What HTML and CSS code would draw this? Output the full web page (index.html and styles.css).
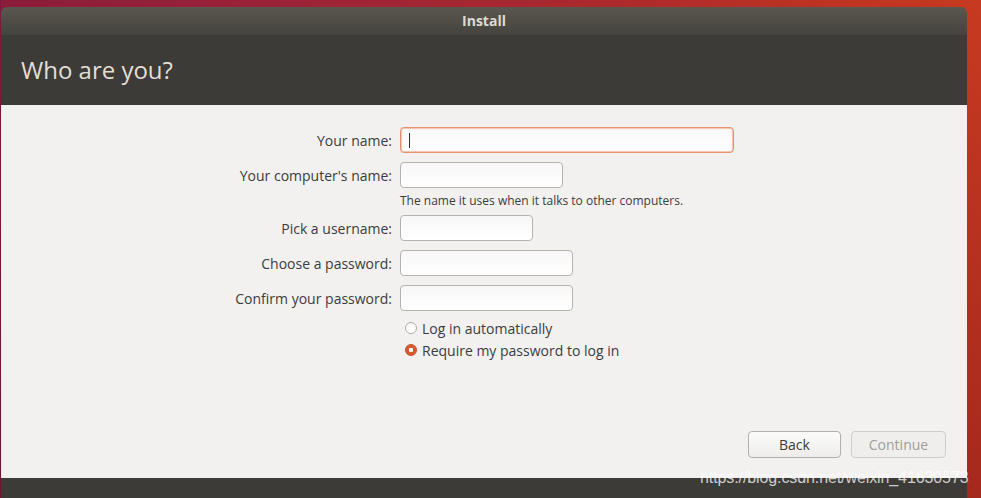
FILE: index.html
```html
<!DOCTYPE html>
<html>
<head>
<meta charset="utf-8">
<link rel="stylesheet" href="styles.css">
</head>
<body>
<div class="window">
  <div class="titlebar">Install</div>
  <div class="header"><h1>Who are you?</h1></div>
  <div class="content">
    <div class="form">
      <label class="lbl">Your name:</label>
      <div class="field"><div class="input focus w-name"><span class="caret"></span></div></div>

      <label class="lbl">Your computer's name:</label>
      <div class="field"><div class="input w-comp"></div></div>
      <div></div>
      <div class="hint">The name it uses when it talks to other computers.</div>

      <label class="lbl">Pick a username:</label>
      <div class="field"><div class="input w-user"></div></div>

      <label class="lbl">Choose a password:</label>
      <div class="field"><div class="input w-pass"></div></div>

      <label class="lbl">Confirm your password:</label>
      <div class="field"><div class="input w-pass"></div></div>

      <div></div>
      <div class="radios">
        <div class="radio"><span class="dot"></span>Log in automatically</div>
        <div class="radio"><span class="dot on"></span>Require my password to log in</div>
      </div>
    </div>
    <div class="buttons">
      <button class="btn">Back</button>
      <button class="btn disabled">Continue</button>
    </div>
  </div>
  <div class="footer"></div>
</div>
<div class="watermark">https://blog.csdn.net/weixin_41630573</div>
</body>
</html>
```
FILE: styles.css
```css
html, body {
  margin: 0;
  padding: 0;
}
body {
  width: 981px;
  height: 498px;
  overflow: hidden;
  position: relative;
  background:
    linear-gradient(180deg, rgba(0, 0, 0, 0) 0px, rgba(90, 0, 20, 0.3) 498px),
    linear-gradient(90deg, #6e1640 0px, #8a1d3a 1px, #97213a 200px, #a8282f 550px, #bf3322 850px, #c73a21 981px);
  padding: 7px 14px 0 1px;
  box-sizing: border-box;
  font-family: "Open Sans", "Noto Sans", sans-serif;
}
.window {
  width: 966px;
  height: 491px;
  display: flex;
  flex-direction: column;
  border-radius: 6px 6px 0 0;
  overflow: hidden;
}
.titlebar {
  height: 28px;
  background: linear-gradient(#5a5750, #45433e);
  color: #dfdbd2;
  font-weight: bold;
  font-size: 14px;
  text-align: center;
  line-height: 28px;
}
.header {
  height: 70px;
  background: #3c3b37;
  display: flex;
  align-items: center;
  padding-left: 20px;
}
.header h1 {
  margin: 0;
  font-weight: normal;
  font-size: 24px;
  color: #e2ded6;
  position: relative;
  top: -1px;
}
.content {
  flex: 1;
  background: #f2f1f0;
  display: flex;
  flex-direction: column;
  justify-content: space-between;
  padding: 22px 21px 20px 0;
}
.form {
  display: grid;
  grid-template-columns: 391px auto;
  column-gap: 8px;
  row-gap: 9px;
  align-items: center;
  justify-items: start;
  color: #3c3c3c;
  font-size: 14px;
}
.lbl {
  justify-self: end;
  color: #3c3c3c;
}
.input {
  height: 24px;
  border: 1px solid #b6b3ae;
  border-radius: 4px;
  background: linear-gradient(#f7f7f7, #ffffff);
  display: flex;
  align-items: center;
}
.focus {
  border-color: #e8906d;
  box-shadow: inset 0 0 0 1px #f4c6b3;
}
.caret {
  width: 1px;
  height: 15px;
  background: #333;
  margin-left: 8px;
}
.w-name { width: 332px; }
.w-comp { width: 161px; }
.w-user { width: 131px; }
.w-pass { width: 171px; }
.hint {
  font-size: 12px;
  margin-top: -5px;
  margin-bottom: -3px;
  color: #3c3c3c;
}
.radios {
  display: flex;
  flex-direction: column;
  gap: 4px;
  margin-top: -1px;
}
.radio {
  display: flex;
  align-items: center;
  height: 18px;
  padding-left: 5px;
  font-size: 14px;
  color: #3c3c3c;
}
.dot {
  width: 10px;
  height: 10px;
  border: 1px solid #b0ada8;
  border-radius: 50%;
  background: linear-gradient(#f6f6f6, #ffffff);
  margin-right: 5px;
  box-sizing: content-box;
}
.dot.on {
  border-color: #c2512b;
  background: radial-gradient(circle, #ffffff 0 2px, #d65a2c 2.5px);
}
.buttons {
  display: flex;
  justify-content: flex-end;
  gap: 10px;
}
.btn {
  height: 27px;
  border: 1px solid #b3afa9;
  border-radius: 4px;
  background: linear-gradient(#fbfbfa, #eeedec);
  font-family: "Open Sans", "Noto Sans", sans-serif;
  font-size: 14px;
  color: #3c3c3c;
  width: 93px;
  padding: 0;
}
.btn.disabled {
  width: 95px;
  color: #a09e9b;
  border-color: #d0cdc9;
  background: #efeeed;
}
.footer {
  height: 20px;
  background: #3c3b37;
}
.watermark {
  position: absolute;
  left: 700px;
  top: 469px;
  font-family: "Liberation Sans", Arial, sans-serif;
  font-size: 16px;
  color: rgba(255, 255, 255, 0.75);
  letter-spacing: -0.1px;
}
```
